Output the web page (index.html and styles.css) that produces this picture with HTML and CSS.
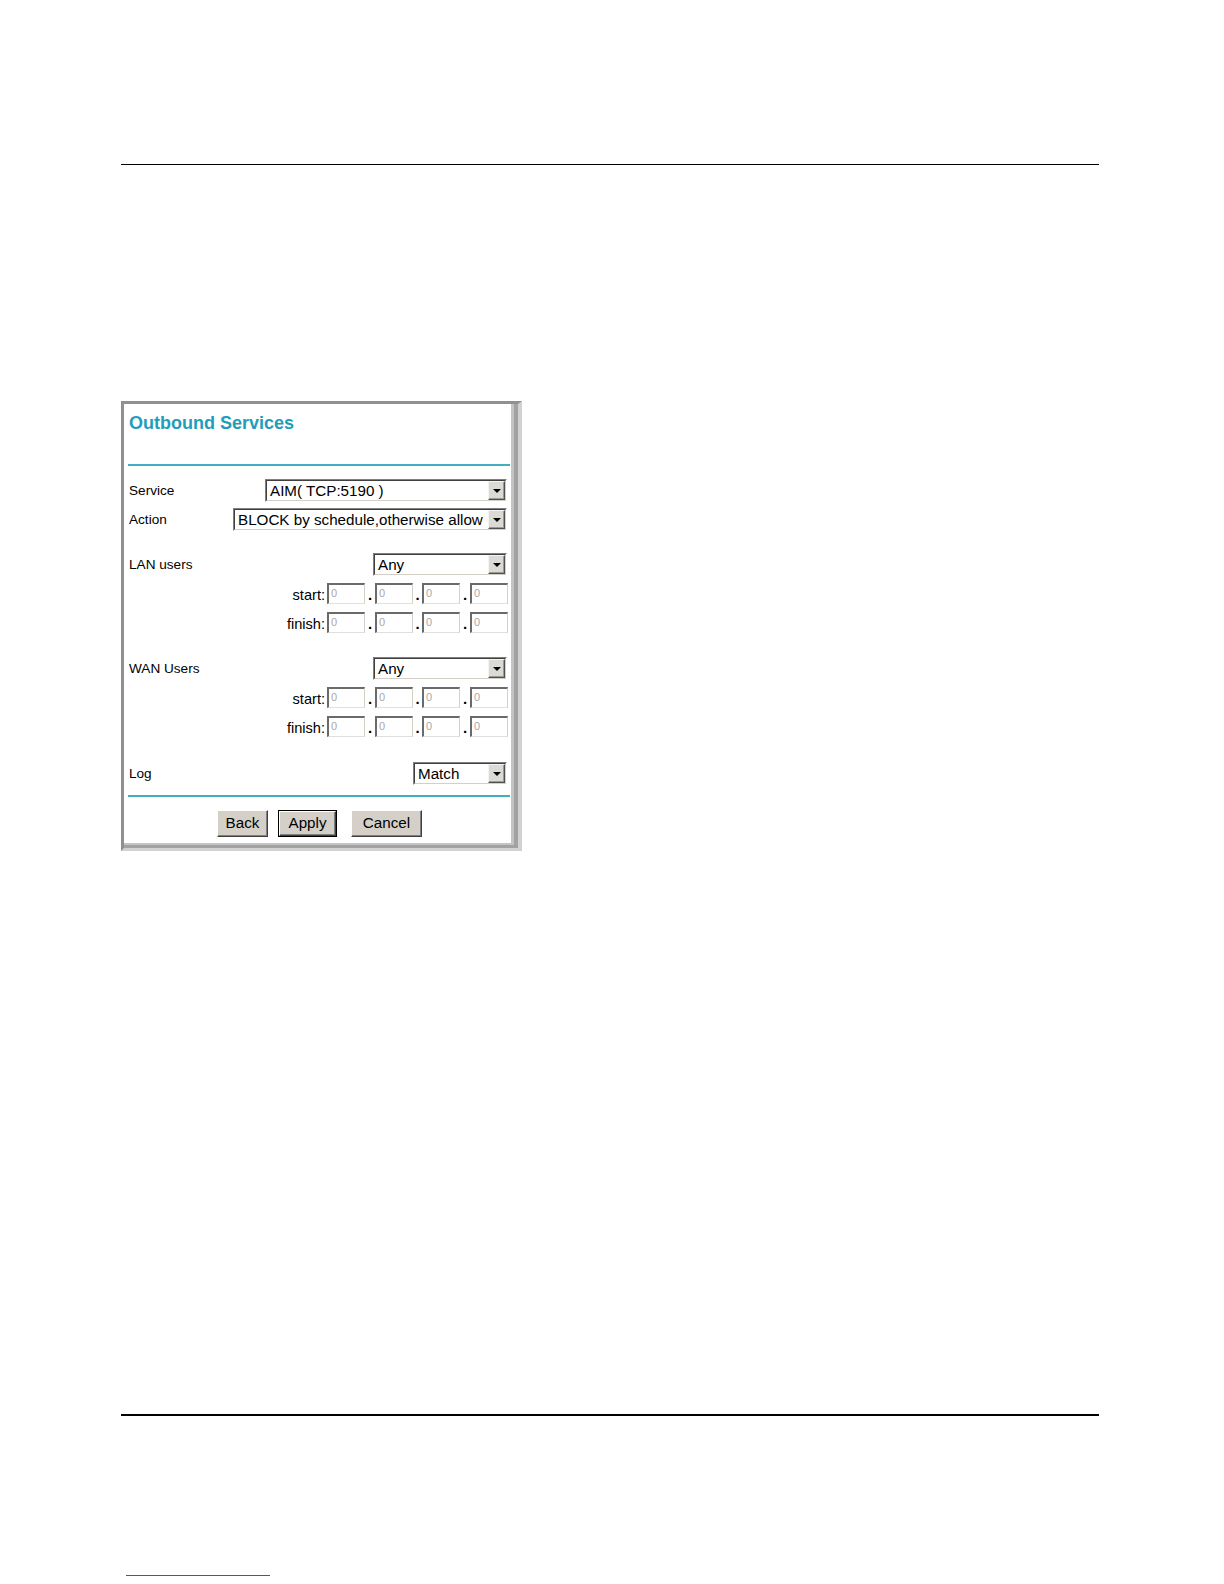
FILE: index.html
```html
<!DOCTYPE html>
<html>
<head>
<meta charset="utf-8">
<title>Outbound Services</title>
<link rel="stylesheet" href="styles.css">
</head>
<body>
<div class="page">
  <div class="rule rule-top"></div>

  <div class="win">
    <div class="win-a">
      <div class="win-b">
        <div class="title">Outbound Services</div>
        <div class="tline tline-top"></div>

        <div class="row r-service">
          <span class="lbl">Service</span>
          <div class="sel w-service"><div class="sel-in"><span class="sel-txt">AIM( TCP:5190 )</span><span class="arr"><i class="tri"></i></span></div></div>
        </div>

        <div class="row r-action">
          <span class="lbl">Action</span>
          <div class="sel w-action"><div class="sel-in"><span class="sel-txt">BLOCK by schedule,otherwise allow</span><span class="arr"><i class="tri"></i></span></div></div>
        </div>

        <div class="row r-group">
          <span class="lbl">LAN users</span>
          <div class="sel w-any"><div class="sel-in"><span class="sel-txt">Any</span><span class="arr"><i class="tri"></i></span></div></div>
        </div>

        <div class="row ip r-start">
          <span class="iplbl">start:</span>
          <span class="ipbox">0</span><span class="dot d1">.</span><span class="ipbox">0</span><span class="dot d2">.</span><span class="ipbox">0</span><span class="dot d3">.</span><span class="ipbox">0</span>
        </div>

        <div class="row ip r-finish">
          <span class="iplbl">finish:</span>
          <span class="ipbox">0</span><span class="dot d1">.</span><span class="ipbox">0</span><span class="dot d2">.</span><span class="ipbox">0</span><span class="dot d3">.</span><span class="ipbox">0</span>
        </div>

        <div class="row r-group2">
          <span class="lbl">WAN Users</span>
          <div class="sel w-any"><div class="sel-in"><span class="sel-txt">Any</span><span class="arr"><i class="tri"></i></span></div></div>
        </div>

        <div class="row ip r-start">
          <span class="iplbl">start:</span>
          <span class="ipbox">0</span><span class="dot d1">.</span><span class="ipbox">0</span><span class="dot d2">.</span><span class="ipbox">0</span><span class="dot d3">.</span><span class="ipbox">0</span>
        </div>

        <div class="row ip r-finish">
          <span class="iplbl">finish:</span>
          <span class="ipbox">0</span><span class="dot d1">.</span><span class="ipbox">0</span><span class="dot d2">.</span><span class="ipbox">0</span><span class="dot d3">.</span><span class="ipbox">0</span>
        </div>

        <div class="row r-log">
          <span class="lbl">Log</span>
          <div class="sel w-log"><div class="sel-in"><span class="sel-txt">Match</span><span class="arr"><i class="tri"></i></span></div></div>
        </div>

        <div class="tline tline-bot"></div>

        <div class="btns">
          <span class="btn b-back">Back</span>
          <span class="btn-def"><span class="btn b-apply">Apply</span></span>
          <span class="btn b-cancel">Cancel</span>
        </div>
      </div>
    </div>
  </div>

  <div class="rule rule-bot"></div>
  <div class="linkline"></div>
</div>
</body>
</html>
```

FILE: styles.css
```css
html, body {
  margin: 0;
  padding: 0;
  background: #ffffff;
}

.page {
  width: 1224px;
  height: 1584px;
  overflow: hidden;
  font-family: "Liberation Sans", Arial, sans-serif;
  color: #000;
}

.rule {
  margin-left: 121px;
  width: 978px;
  background: #000;
}

.rule-top {
  margin-top: 164px;
  height: 1px;
}

.rule-bot {
  margin-top: 563px;
  height: 2px;
}

.linkline {
  margin-top: 159px;
  margin-left: 126px;
  width: 144px;
  height: 1px;
  background: #4a4ad0;
}

/* window frame */
.win {
  margin-top: 236px;
  margin-left: 121px;
  width: 401px;
  height: 450px;
  box-sizing: border-box;
  border-top: 3px solid #909090;
  border-left: 3px solid #909090;
  border-right: 4px solid #d2d2d2;
  border-bottom: 3px solid #d2d2d2;
}

.win-a {
  height: 100%;
  box-sizing: border-box;
  border-right: 4px solid #a2a2a2;
  border-bottom: 3px solid #a2a2a2;
}

.win-b {
  height: 100%;
  box-sizing: border-box;
  border-right: 3px solid #c4c4c4;
  border-bottom: 2px solid #c4c4c4;
  background: #fff;
  padding: 8px 1px 0 4px;
  display: flex;
  flex-direction: column;
}

.title {
  font-size: 18px;
  line-height: 22px;
  font-weight: bold;
  color: #1f9db9;
  padding-left: 1px;
  height: 22px;
}

.tline {
  height: 2px;
  background: #42afc0;
}

.tline-top { margin-top: 30px; }
.tline-bot { margin-top: 10px; }

.row {
  display: flex;
  align-items: center;
  justify-content: space-between;
  padding-right: 3px;
  padding-left: 1px;
}

.lbl {
  font-size: 13.6px;
  line-height: 16px;
}

.r-service { margin-top: 13px; }
.r-action  { margin-top: 6px; }
.r-group   { margin-top: 22px; }
.r-group2  { margin-top: 24px; }
.r-log     { margin-top: 25px; }

.r-start  { margin-top: 7px; }
.r-finish { margin-top: 8px; }

/* select boxes */
.sel {
  height: 23px;
  box-sizing: border-box;
  border-top: 1px solid #808080;
  border-left: 1px solid #808080;
  border-right: 1px solid #ffffff;
  border-bottom: 1px solid #ffffff;
  display: flex;
}

.sel-in {
  flex: 1;
  display: flex;
  align-items: stretch;
  box-sizing: border-box;
  border-top: 1px solid #404040;
  border-left: 1px solid #404040;
  border-right: 1px solid #d4d0c8;
  border-bottom: 1px solid #d4d0c8;
  background: #fff;
}

.sel-txt {
  flex: 1;
  font-size: 15.2px;
  line-height: 19px;
  padding-left: 3px;
  white-space: nowrap;
  overflow: hidden;
}

.arr {
  width: 17px;
  box-sizing: border-box;
  background: #dcdad4;
  border-top: 1px solid #f4f4f4;
  border-left: 1px solid #f4f4f4;
  border-right: 1px solid #505050;
  border-bottom: 1px solid #505050;
  box-shadow: inset -1px -1px 0 #9a9a9a;
  display: flex;
  align-items: center;
  justify-content: center;
}

.tri {
  display: block;
  width: 0;
  height: 0;
  border-left: 4px solid transparent;
  border-right: 4px solid transparent;
  border-top: 4px solid #000;
  margin-top: 1px;
}

.w-service { width: 242px; }
.w-action  { width: 274px; }
.w-any     { width: 134px; }
.w-log     { width: 94px; }

/* ip rows */
.ip {
  justify-content: flex-end;
  padding-right: 2px;
}

.iplbl {
  font-size: 14.6px;
  line-height: 18px;
  margin-right: 2px;
  padding-top: 3px;
}

.ipbox {
  width: 38px;
  height: 21px;
  box-sizing: border-box;
  border-top: 2px solid #6a6a6a;
  border-left: 2px solid #6a6a6a;
  border-right: 1px solid #d4d0c8;
  border-bottom: 1px solid #e0e0e0;
  font-size: 11px;
  line-height: 17px;
  color: #a8a8a8;
  padding-left: 2px;
  background: #fff;
}

.dot {
  width: 10px;
  text-align: center;
  font-size: 15px;
  font-weight: bold;
  line-height: 18px;
  align-self: flex-end;
}

.d2 { width: 9px; }

/* buttons */
.btns {
  margin-top: 13px;
  display: flex;
  justify-content: center;
  align-items: center;
  padding-left: 1px;
}

.btn {
  height: 27px;
  box-sizing: border-box;
  background: #d4d0c8;
  border-top: 1px solid #ffffff;
  border-left: 1px solid #ffffff;
  border-right: 1px solid #404040;
  border-bottom: 1px solid #404040;
  box-shadow: inset -1px -1px 0 #808080;
  font-size: 15.2px;
  line-height: 24px;
  text-align: center;
  display: block;
}

.btn-def {
  display: block;
  border: 1px solid #000;
  margin-right: 14px;
}

.btn-def .btn {
  height: 25px;
  line-height: 22px;
}

.b-back   { width: 51px; margin-right: 10px; }
.b-apply  { width: 57px; }
.b-cancel { width: 71px; }
```
